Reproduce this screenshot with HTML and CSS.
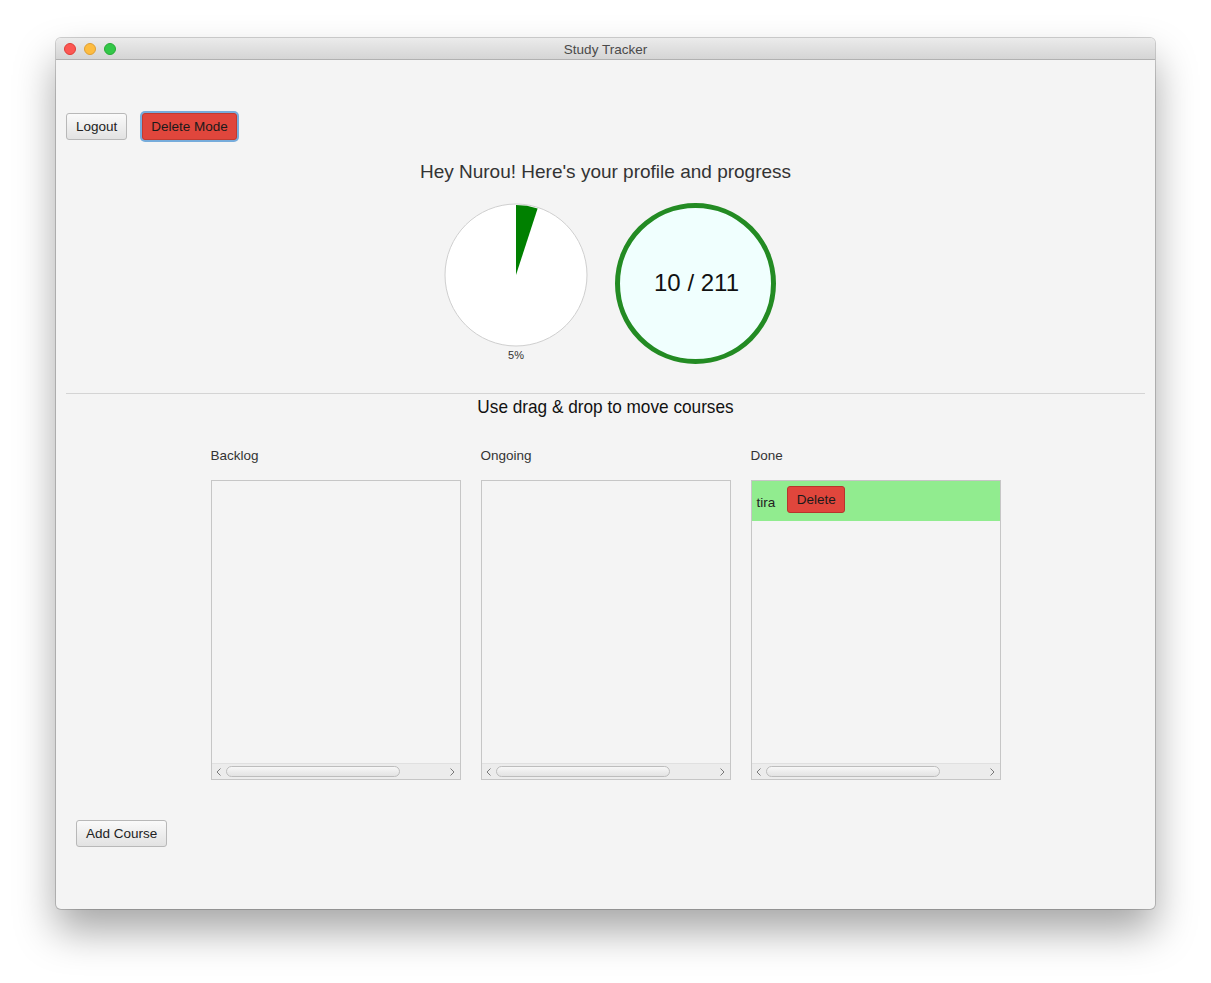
FILE: index.html
```html
<!DOCTYPE html>
<html>
<head>
<meta charset="utf-8">
<link rel="stylesheet" href="styles.css">
</head>
<body>
<div class="window">
  <div class="titlebar">
    <div class="lights">
      <span class="light red"></span>
      <span class="light yellow"></span>
      <span class="light green"></span>
    </div>
    <div class="title">Study Tracker</div>
  </div>
  <div class="content">
    <div class="toolbar">
      <button class="btn">Logout</button>
      <button class="btn btn-red focused">Delete Mode</button>
    </div>
    <h1 class="heading">Hey Nurou! Here's your profile and progress</h1>
    <div class="charts">
      <div class="pie-wrap">
        <svg class="pie" width="144" height="144" viewBox="0 0 144 144">
          <circle cx="72" cy="72" r="71" fill="#ffffff" stroke="#cfcfcf" stroke-width="1"/>
          <path d="M72 72 L72 2 A70 70 0 0 1 93.6 5.4 Z" fill="#008000"/>
        </svg>
        <div class="pie-label">5%</div>
      </div>
      <div class="count-circle">10 / 211</div>
    </div>
    <hr class="sep">
    <div class="hint">Use drag &amp; drop to move courses</div>
    <div class="columns">
      <div class="column">
        <div class="col-label">Backlog</div>
        <div class="list">
          <div class="list-body"></div>
          <div class="hscroll">
            <svg class="arrow" width="8" height="10" viewBox="0 0 8 10"><path d="M5.5 1.5 L2 5 L5.5 8.5" fill="none" stroke="#7a7a7a" stroke-width="1"/></svg>
            <span class="thumb"></span>
            <svg class="arrow" width="8" height="10" viewBox="0 0 8 10"><path d="M2.5 1.5 L6 5 L2.5 8.5" fill="none" stroke="#7a7a7a" stroke-width="1"/></svg>
          </div>
        </div>
      </div>
      <div class="column">
        <div class="col-label">Ongoing</div>
        <div class="list">
          <div class="list-body"></div>
          <div class="hscroll">
            <svg class="arrow" width="8" height="10" viewBox="0 0 8 10"><path d="M5.5 1.5 L2 5 L5.5 8.5" fill="none" stroke="#7a7a7a" stroke-width="1"/></svg>
            <span class="thumb"></span>
            <svg class="arrow" width="8" height="10" viewBox="0 0 8 10"><path d="M2.5 1.5 L6 5 L2.5 8.5" fill="none" stroke="#7a7a7a" stroke-width="1"/></svg>
          </div>
        </div>
      </div>
      <div class="column">
        <div class="col-label">Done</div>
        <div class="list">
          <div class="list-body">
            <div class="item"><span class="item-name">tira</span><button class="btn btn-red small">Delete</button></div>
          </div>
          <div class="hscroll">
            <svg class="arrow" width="8" height="10" viewBox="0 0 8 10"><path d="M5.5 1.5 L2 5 L5.5 8.5" fill="none" stroke="#7a7a7a" stroke-width="1"/></svg>
            <span class="thumb"></span>
            <svg class="arrow" width="8" height="10" viewBox="0 0 8 10"><path d="M2.5 1.5 L6 5 L2.5 8.5" fill="none" stroke="#7a7a7a" stroke-width="1"/></svg>
          </div>
        </div>
      </div>
    </div>
    <div class="footer">
      <button class="btn">Add Course</button>
    </div>
  </div>
</div>
</body>
</html>
```
FILE: styles.css
```css
html, body {
  margin: 0;
  padding: 0;
  background: #ffffff;
}
body {
  font-family: "Liberation Sans", Arial, sans-serif;
  color: #222;
  padding: 38px 0 0 56px;
  height: 983px;
  box-sizing: border-box;
  overflow: hidden;
}
.window {
  width: 1099px;
  height: 871px;
  border-radius: 5px;
  overflow: hidden;
  background: #f4f4f4;
  box-shadow: 0 22px 40px rgba(0,0,0,0.35), 0 0 0 1px rgba(0,0,0,0.18);
}
.titlebar {
  height: 21px;
  background: linear-gradient(#ebebeb, #d5d5d5);
  border-bottom: 1px solid #b1b1b1;
  position: relative;
  display: flex;
  align-items: center;
  justify-content: center;
}
.lights {
  position: absolute;
  left: 8px;
  top: 5px;
  display: flex;
  gap: 8px;
}
.light {
  width: 12px;
  height: 12px;
  border-radius: 50%;
  box-sizing: border-box;
}
.light.red { background: #fc5753; border: 1px solid #df3d36; }
.light.yellow { background: #fdbc40; border: 1px solid #de9f34; }
.light.green { background: #33c748; border: 1px solid #27aa35; }
.title {
  font-size: 13.5px;
  color: #4a4a4a;
  padding-top: 1px;
}
.content {
  height: 849px;
}
.toolbar {
  display: flex;
  gap: 15px;
  padding: 53px 0 0 10px;
}
.btn {
  font-family: "Liberation Sans", Arial, sans-serif;
  font-size: 13.5px;
  color: #222;
  height: 27px;
  padding: 0 9px;
  border: 1px solid #b8b8b8;
  border-radius: 3px;
  background: linear-gradient(#fafafa, #e2e2e2);
  box-sizing: border-box;
}
.btn-red {
  background: #e0463c;
  border-color: #b8352c;
  color: #1a1a1a;
}
.btn-red.focused {
  border: 1px solid #c23a30;
  box-shadow: 0 0 0 2px #77acdb;
  padding: 0 8px;
}
.heading {
  margin: 21px 0 0 0;
  font-size: 19px;
  font-weight: normal;
  line-height: 22px;
  text-align: center;
  color: #333;
}
.charts {
  margin-top: 20px;
  display: flex;
  justify-content: center;
  gap: 27px;
  padding-left: 9px;
  height: 160px;
}
.pie-wrap {
  display: flex;
  flex-direction: column;
  align-items: center;
}
.pie {
  display: block;
}
.pie-label {
  font-size: 11px;
  line-height: 13px;
  margin-top: 2px;
  color: #333;
}
.count-circle {
  width: 161px;
  height: 161px;
  box-sizing: border-box;
  border: 5px solid #238b23;
  border-radius: 50%;
  background: #f0fffe;
  display: flex;
  align-items: center;
  justify-content: center;
  font-size: 24px;
  color: #111;
  padding-left: 2px;
  padding-bottom: 2px;
}
.sep {
  margin: 30px 10px 0 10px;
  border: 0;
  border-top: 1px solid #d4d4d4;
  height: 0;
}
.hint {
  margin-top: 3px;
  text-align: center;
  font-size: 18.5px;
  line-height: 20px;
  color: #111;
  transform: scaleX(0.93);
}
.columns {
  margin-top: 31px;
  display: flex;
  justify-content: center;
  gap: 20px;
}
.column {
  width: 250px;
}
.col-label {
  font-size: 13.5px;
  line-height: 16px;
  color: #333;
  margin-bottom: 16px;
}
.list {
  height: 300px;
  box-sizing: border-box;
  border: 1px solid #c6c6c6;
  background: #f4f4f4;
  display: flex;
  flex-direction: column;
}
.list-body {
  flex: 1;
}
.item {
  height: 40px;
  background: #91ec8f;
  display: flex;
  align-items: center;
  padding-left: 5px;
  gap: 12px;
}
.item-name {
  font-size: 13.5px;
  color: #222;
  margin-top: 2px;
}
.btn.small {
  padding: 0 8px;
  width: 58px;
  margin-top: -4px;
}
.hscroll {
  height: 15px;
  border-top: 1px solid #e0e0e0;
  background: #ececec;
  display: flex;
  align-items: center;
  padding: 0 4px 0 3px;
  gap: 3px;
}
.arrow {
  display: block;
  flex: none;
}
.thumb {
  width: 174px;
  height: 11px;
  box-sizing: border-box;
  border: 1px solid #bdbdbd;
  border-radius: 6px;
  background: linear-gradient(#f7f7f7, #e3e3e3);
  margin-right: auto;
}
.footer {
  margin-top: 40px;
  padding-left: 20px;
}
```
